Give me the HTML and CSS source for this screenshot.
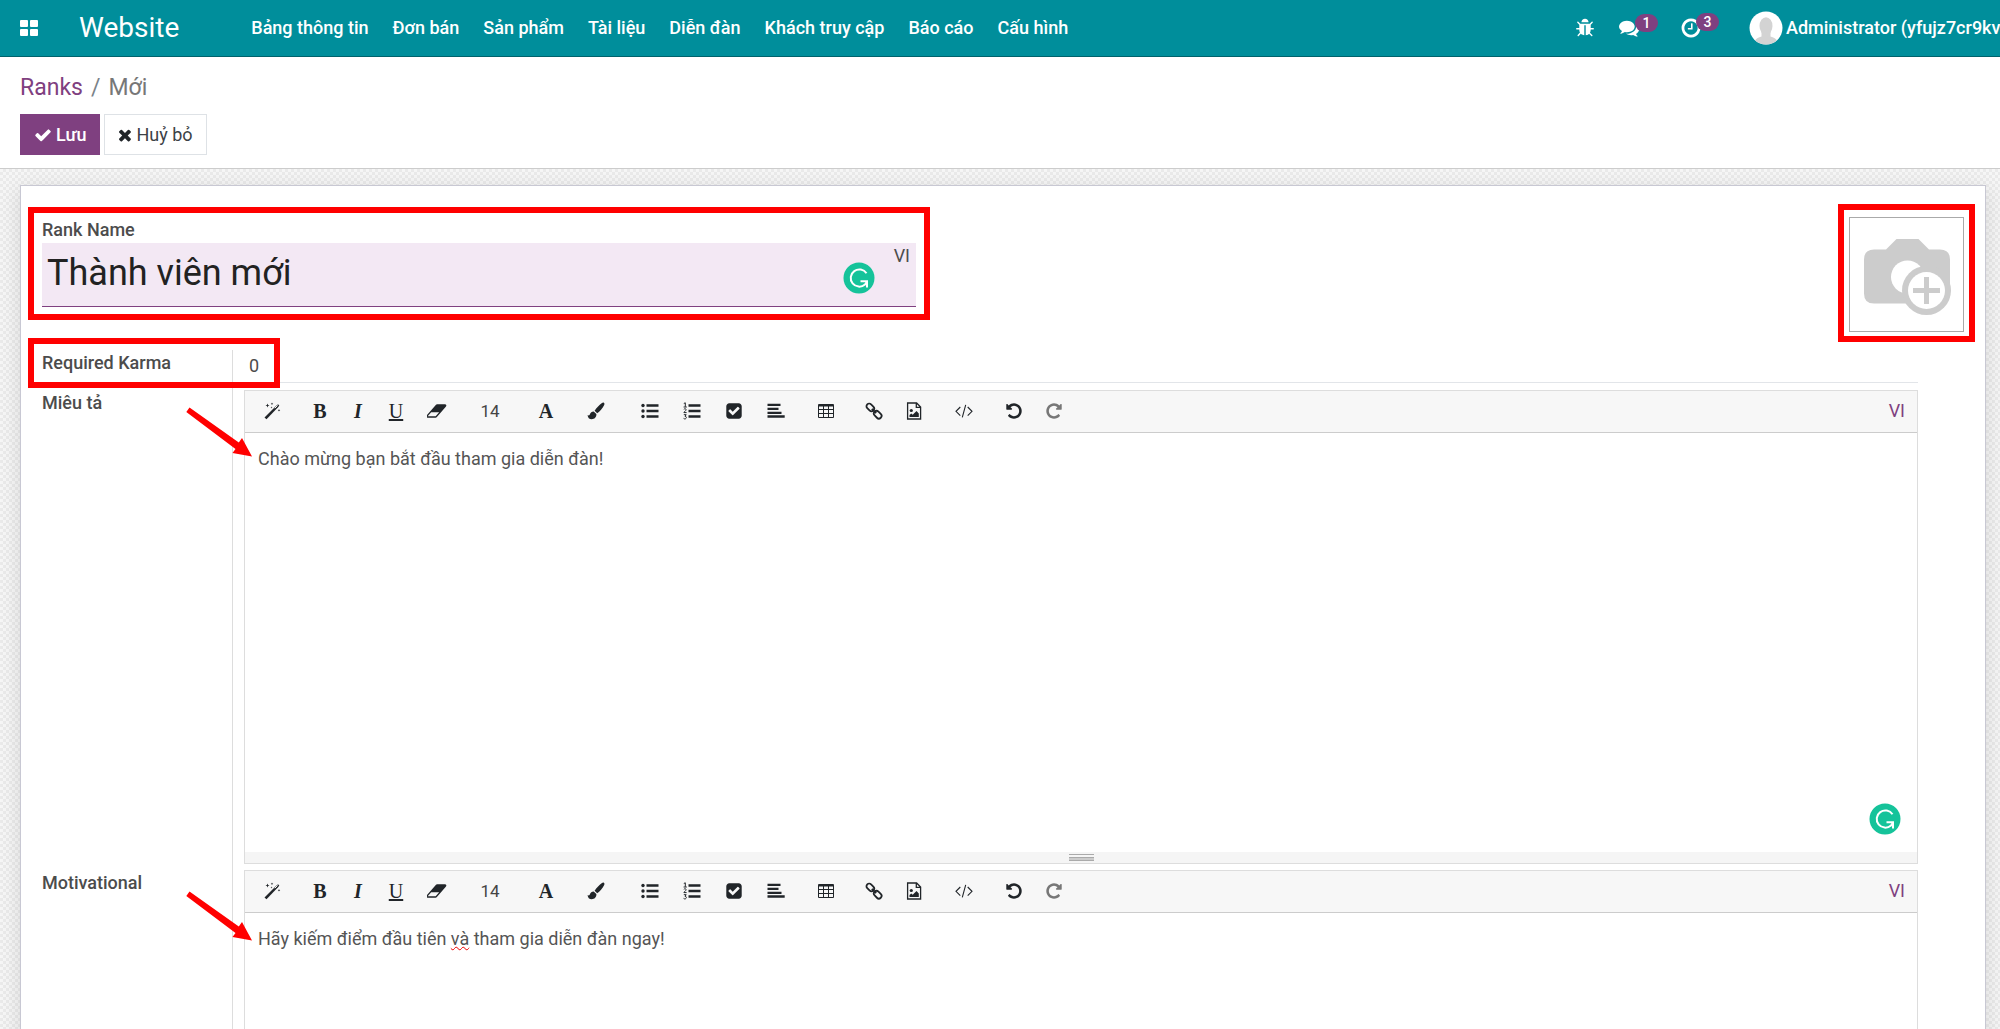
FILE: index.html
```html
<!DOCTYPE html>
<html lang="vi">
<head>
<meta charset="utf-8">
<title>Ranks - Mới</title>
<link rel="stylesheet" href="styles.css">
</head>
<body>
<svg class="sprite" aria-hidden="true">
  <symbol id="i-apps" viewBox="0 0 18 16"><rect width="8" height="7" rx="1"/><rect x="10" width="8" height="7" rx="1"/><rect y="9" width="8" height="7" rx="1"/><rect x="10" y="9" width="8" height="7" rx="1"/></symbol>
  <symbol id="i-bug" viewBox="0 0 1792 1792"><path d="M1696 960q0 26-19 45t-45 19h-224q0 171-67 290l208 209q19 19 19 45t-19 45q-18 19-45 19t-45-19l-198-197q-5 5-15 13t-42 28.500-65 36.500-82 29-97 13v-896h-128v896q-51 0-101.500-13.500t-87-33-66-39-43.500-32.500l-15-14-183 207q-20 21-48 21-24 0-43-16-19-18-20.500-44.500t15.500-46.500l202-227q-58-114-58-274h-224q-26 0-45-19t-19-45 19-45 45-19h224v-294l-173-173q-19-19-19-45t19-45 45-19 45 19l173 173h844l173-173q19-19 45-19t45 19 19 45-19 45l-173 173v294h224q26 0 45 19t19 45zm-480-576h-640q0-133 93.500-226.500t226.500-93.500 226.500 93.500 93.500 226.500z"/></symbol>
  <symbol id="i-comments" viewBox="0 0 1792 1792"><path d="M1408 768q0 139-94 257t-256.500 186.500-353.500 68.500q-86 0-176-16-124 88-278 128-36 9-86 16h-3q-11 0-20.500-8t-11.500-21q-1-3-1-6.500t.5-6.500 2-6l2.500-5 3.500-5.500 4-5 4.500-5 4-4.500q5-6 23-25t26-29.500 22.500-29 25-38.500 20.500-44q-124-72-195-177t-71-224q0-139 94-257t256.500-186.500 353.500-68.500 353.500 68.500 256.500 186.500 94 257zm384 256q0 120-71 224.500t-195 176.500q10 24 20.500 44t25 38.500 22.500 29 26 29.500 23 25q1 1 4 4.500t4.500 5 4 5 3.500 5.500l2.500 5 2 6 .5 6.500-1 6.500q-3 14-13 22t-22 7q-50-7-86-16-154-40-278-128-90 16-176 16-271 0-472-132 58 4 88 4 161 0 309-45t264-129q125-92 192-212t67-254q0-77-23-152 129 71 204 178t75 230z"/></symbol>
  <symbol id="i-clock" viewBox="0 0 1792 1792"><path d="M1024 544v448q0 14-9 23t-23 9h-320q-14 0-23-9t-9-23v-64q0-14 9-23t23-9h224v-352q0-14 9-23t23-9h64q14 0 23 9t9 23zm416 352q0-148-73-273t-198-198-273-73-273 73-198 198-73 273 73 273 198 198 273 73 273-73 198-198 73-273zm224 0q0 209-103 385.500t-279.500 279.500-385.500 103-385.500-103-279.500-279.500-103-385.500 103-385.500 279.500-279.500 385.500-103 385.500 103 279.500 279.500 103 385.500z"/></symbol>
  <symbol id="i-check" viewBox="0 0 1792 1792"><path d="M1671 566q0 40-28 68l-724 724-136 136q-28 28-68 28t-68-28l-136-136-362-362q-28-28-28-68t28-68l136-136q28-28 68-28t68 28l294 295 656-657q28-28 68-28t68 28l136 136q28 28 28 68z"/></symbol>
  <symbol id="i-times" viewBox="200 200 1400 1400"><path d="M1490 1322q0 40-28 68l-136 136q-28 28-68 28t-68-28l-294-294-294 294q-28 28-68 28t-68-28l-136-136q-28-28-28-68t28-68l294-294-294-294q-28-28-28-68t28-68l136-136q28-28 68-28t68 28l294 294 294-294q28-28 68-28t68 28l136 136q28 28 28 68t-28 68l-294 294 294 294q28 28 28 68z"/></symbol>
  <symbol id="i-magic" viewBox="0 0 18 18"><path d="M1.500 15.500 13 4l2-1.800 1.300 1.300L15 5.300 3.500 17.200z"/><path d="M11.800 6.200 14.600 3.400" stroke="#f7f7f7" stroke-width="1"/><path d="M4.500 1.500l.6 1.400 1.400.6-1.400.6-.6 1.400-.6-1.400-1.400-.6 1.400-.6zM9 .5l.4.900.9.400-.9.400L9 3.100l-.4-.9-.9-.4.900-.4zM8.500 4.500l.3.700.7.300-.7.300-.3.700-.3-.7-.7-.3.700-.3zM16 7l.4.900.9.400-.9.400-.4.900-.4-.9-.9-.4.900-.4z"/></symbol>
  <symbol id="i-eraser" viewBox="0 0 1920 1792"><path d="M832 1408l336-384h-768l-336 384h768zm1013-1077q15 34 9.500 71.500t-30.500 65.500l-896 1024q-38 44-96 44h-768q-38 0-69.500-20.500t-47.500-54.500q-15-34-9.500-71.500t30.500-65.500l896-1024q38-44 96-44h768q38 0 69.500 20.500t47.500 54.500z"/></symbol>
  <symbol id="i-brush" viewBox="0 0 18 18"><path d="M16.500.6c1 .4 1.200 1.400.7 2.400C15.500 6.500 12.800 9.700 10.200 11.300L7.600 8.700C9.500 6 12.500 2.500 15 1c.5-.4 1-.6 1.500-.4zM6.700 9.500l2.700 2.600c.2 3.200-2 5.200-4.700 5.200C2.200 17.300.8 15.700.6 13c1 .6 1.700.6 2.200-.6.700-1.900 2-2.900 3.900-2.900z"/></symbol>
  <symbol id="i-ul" viewBox="0 0 18 18"><circle cx="2" cy="3.500" r="1.700"/><circle cx="2" cy="9" r="1.700"/><circle cx="2" cy="14.500" r="1.700"/><path d="M5.500 2.300h12v2.400h-12zM5.500 7.800h12v2.400h-12zM5.500 13.300h12v2.400h-12z"/></symbol>
  <symbol id="i-ol" viewBox="0 0 18 18"><path d="M5.500 2.300h12v2.400h-12zM5.500 7.800h12v2.400h-12zM5.500 13.300h12v2.400h-12z"/><path fill="none" stroke="currentColor" stroke-width="1" d="M.8 1.500 2.300.8v4M.6 5h3.200M.8 7.300c1-1 2.500-.5 2.300.5-.1.800-1.700 1.600-2.200 2.800h2.700M.8 12.700h2.400l-1.200 1.600c2 0 1.700 2.600-.2 2.600-.6 0-1-.2-1.200-.5"/></symbol>
  <symbol id="i-checksq" viewBox="0 0 1792 1792"><path d="M813 1299l614-614q19-19 19-45t-19-45l-102-102q-19-19-45-19t-45 19l-467 467-211-211q-19-19-45-19t-45 19l-102 102q-19 19-19 45t19 45l358 358q19 19 45 19t45-19zm851-883v960q0 119-84.500 203.500t-203.500 84.500h-960q-119 0-203.500-84.500t-84.500-203.500v-960q0-119 84.500-203.500t203.500-84.500h960q119 0 203.500 84.500t84.500 203.500z"/></symbol>
  <symbol id="i-align" viewBox="0 0 18 18"><path d="M.5 1.800h13V4H.5zM.5 5.800h11V8H.5zM.5 9.800h14V12H.5zM.5 13.300h17.200v2.400H.5z"/></symbol>
  <symbol id="i-table" viewBox="0 0 18 18"><path fill="none" stroke="currentColor" d="M1.500 3.500v12h15v-12M1.500 7.500h15M1.500 11.500h15M6.500 4v11M11.500 4v11"/><rect x="1" y="2" width="16" height="2.600" rx="1"/></symbol>
  <symbol id="i-link" viewBox="0 0 18 18"><g fill="none" stroke="currentColor" stroke-width="1.800"><rect x="1" y="2.700" width="8.600" height="5.400" rx="2.700" transform="rotate(45 5.300 5.400)"/><rect x="8.400" y="10" width="8.600" height="5.400" rx="2.700" transform="rotate(45 12.700 12.700)"/><path d="M6.800 6.800 11.200 11.200"/></g></symbol>
  <symbol id="i-image" viewBox="0 0 18 18"><path fill="none" stroke="currentColor" stroke-width="1.300" d="M2.600 1h9l4 4v12h-13zM11.300 1v4.400h4.300"/><circle cx="6.300" cy="8.500" r="1.600"/><path d="M4.500 15v-2l1.800-1.600 1.400 1.300 3.800-3.600 2.300 2.500V15z"/></symbol>
  <symbol id="i-code" viewBox="0 0 18 18"><path fill="none" stroke="currentColor" stroke-width="1.100" d="M5.300 5 1 9.300l4.300 4.300M12.700 5 17 9.300l-4.300 4.300M10.700 2.800 7.300 15.400"/></symbol>
  <symbol id="i-undo" viewBox="0 0 1792 1792"><path d="M1664 896q0 156-61 298t-164 245-245 164-298 61q-172 0-327-72.500t-264-204.500q-7-10-6.500-22.500t8.500-20.500l137-138q10-9 25-9 16 2 23 12 73 95 179 147t225 52q104 0 198.500-40.500t163.500-109.500 109.500-163.500 40.500-198.500-40.500-198.500-109.500-163.500-163.500-109.500-198.500-40.500q-98 0-188 35.500t-160 101.500l137 138q31 30 14 69-17 40-59 40h-448q-26 0-45-19t-19-45v-448q0-42 40-59 39-17 69 14l130 129q107-101 244.500-156.500t284.500-55.500q156 0 298 61t245 164 164 245 61 298z"/></symbol>
  <symbol id="i-redo" viewBox="0 0 1792 1792"><use href="#i-undo" width="1792" height="1792" transform="translate(1792 0) scale(-1 1)"/></symbol>
  <symbol id="i-grammar" viewBox="0 0 32 32"><circle cx="16" cy="16" r="15.500" fill="#15c39a"/><path fill="none" stroke="#fff" stroke-width="2" d="M23.500 11.300A8.600 8.600 0 1 0 22 22.500l2-3"/><path fill="#fff" d="M17.500 18.200H25v7.300h-2v-5.300h-5.500z"/></symbol>
  <symbol id="i-arrow" viewBox="0 0 68 52"><path fill="#f00" d="M3.500.5 52.800 35.500 56 31l10 18.500L46.500 46l3-4L.3 5z"/></symbol>
</svg>

<header class="navbar">
  <button class="apps" aria-label="Apps"><svg class="apps-icon"><use href="#i-apps"/></svg></button>
  <a class="brand" href="#">Website</a>
  <nav class="menu">
    <a href="#">Bảng thông tin</a><a href="#">Đơn bán</a><a href="#">Sản phẩm</a><a href="#">Tài liệu</a><a href="#">Diễn đàn</a><a href="#">Khách truy cập</a><a href="#">Báo cáo</a><a href="#">Cấu hình</a>
  </nav>
  <div class="systray">
    <button class="tray" aria-label="Debug"><svg class="icon icon-wide"><use href="#i-bug"/></svg></button>
    <button class="tray" aria-label="Messages"><svg class="icon icon-wide"><use href="#i-comments"/></svg><span class="badge">1</span></button>
    <button class="tray" aria-label="Activities"><svg class="icon icon-large"><use href="#i-clock"/></svg><span class="badge">3</span></button>
    <button class="user">
      <svg class="avatar" viewBox="0 0 34 34"><clipPath id="round"><circle cx="17" cy="17" r="16.500"/></clipPath><circle cx="17" cy="17" r="16.500" fill="#fff"/><g clip-path="url(#round)" fill="#d3d3d3"><ellipse cx="17" cy="15" rx="6.500" ry="8.800"/><path d="M12.500 19h9v6.500c4 1 6.500 2.500 7.500 6.500v3H5v-3c1-4 3.500-5.500 7.500-6.500z"/></g></svg>
      <span>Administrator (yfujz7cr9kvx</span>
    </button>
  </div>
</header>

<section class="control-panel">
  <div class="breadcrumb"><a href="#">Ranks</a><span class="slash">/</span><span class="current">Mới</span></div>
  <div class="actions">
    <button class="btn btn-primary"><svg class="btn-icon"><use href="#i-check"/></svg>Lưu</button>
    <button class="btn btn-default"><svg class="btn-icon btn-icon-small"><use href="#i-times"/></svg>Huỷ bỏ</button>
  </div>
</section>

<main class="content">
  <form class="sheet">
    <div class="head">
      <div class="title marked">
        <label class="label" for="rank">Rank Name</label>
        <div class="title-field">
          <input id="rank" class="title-input" type="text" value="Thành viên mới" spellcheck="false">
          <svg class="grammar grammar-title"><use href="#i-grammar"/></svg>
          <button type="button" class="lang lang-title">VI</button>
        </div>
      </div>
      <button type="button" class="photo marked" aria-label="Image">
        <svg class="camera" viewBox="0 0 88 78"><path fill="#ccc" d="M11 11.500h12L33.500 1h22L66 11.500h11q10 0 10 10v34q0 10-10 10H11q-10 0-10-10v-34q0-10 10-10z"/><circle cx="44.500" cy="39" r="16.500" fill="#fff"/><circle cx="63.500" cy="52.500" r="24.500" fill="#ccc"/><circle cx="63.500" cy="52.500" r="18.500" fill="#fff"/><path fill="#ccc" d="M61 39h5v11h11v5H66v11h-5V55H50v-5h11z"/></svg>
      </button>
    </div>

    <div class="group">
      <div class="row row-karma">
        <label class="label" for="karma">Required Karma</label>
        <div class="cell"><input id="karma" class="karma" type="text" value="0"></div>
      </div>
      <div class="row">
        <span class="label" id="desc-label">Miêu tả</span>
        <svg class="arrow arrow-first"><use href="#i-arrow"/></svg>
        <div class="cell">
          <div class="editor">
            <div class="toolbar">
              <div class="tools"><button type="button" class="tool" aria-label="Style"><svg class="icon"><use href="#i-magic"/></svg></button></div>
              <div class="tools"><button type="button" class="tool tool-narrow glyph bold">B</button><button type="button" class="tool tool-narrow glyph italic">I</button><button type="button" class="tool tool-narrow glyph under">U</button><button type="button" class="tool tool-wide" aria-label="Clear"><svg class="icon icon-wide"><use href="#i-eraser"/></svg></button></div>
              <div class="tools"><button type="button" class="tool tool-size">14</button></div>
              <div class="tools"><button type="button" class="tool tool-color glyph bold">A</button><button type="button" class="tool tool-color" aria-label="Highlight"><svg class="icon"><use href="#i-brush"/></svg></button></div>
              <div class="tools"><button type="button" class="tool" aria-label="Bullets"><svg class="icon"><use href="#i-ul"/></svg></button><button type="button" class="tool" aria-label="Numbers"><svg class="icon"><use href="#i-ol"/></svg></button><button type="button" class="tool" aria-label="Checklist"><svg class="icon"><use href="#i-checksq"/></svg></button><button type="button" class="tool" aria-label="Align"><svg class="icon"><use href="#i-align"/></svg></button></div>
              <div class="tools"><button type="button" class="tool" aria-label="Table"><svg class="icon"><use href="#i-table"/></svg></button></div>
              <div class="tools"><button type="button" class="tool tool-narrow" aria-label="Link"><svg class="icon"><use href="#i-link"/></svg></button><button type="button" class="tool" aria-label="Picture"><svg class="icon"><use href="#i-image"/></svg></button></div>
              <div class="tools"><button type="button" class="tool" aria-label="Code"><svg class="icon"><use href="#i-code"/></svg></button></div>
              <div class="tools"><button type="button" class="tool" aria-label="Undo"><svg class="icon"><use href="#i-undo"/></svg></button><button type="button" class="tool tool-narrow muted" aria-label="Redo"><svg class="icon"><use href="#i-redo"/></svg></button></div>
              <button type="button" class="lang lang-editor">VI</button>
            </div>
            <div class="text" contenteditable="true" role="textbox" aria-labelledby="desc-label" spellcheck="false">Chào mừng bạn bắt đầu tham gia diễn đàn!</div>
            <svg class="grammar grammar-editor"><use href="#i-grammar"/></svg>
            <div class="statusbar"><span class="grip"></span></div>
          </div>
        </div>
      </div>
      <div class="row">
        <span class="label" id="moti-label">Motivational</span>
        <svg class="arrow"><use href="#i-arrow"/></svg>
        <div class="cell">
          <div class="editor">
            <div class="toolbar">
              <div class="tools"><button type="button" class="tool" aria-label="Style"><svg class="icon"><use href="#i-magic"/></svg></button></div>
              <div class="tools"><button type="button" class="tool tool-narrow glyph bold">B</button><button type="button" class="tool tool-narrow glyph italic">I</button><button type="button" class="tool tool-narrow glyph under">U</button><button type="button" class="tool tool-wide" aria-label="Clear"><svg class="icon icon-wide"><use href="#i-eraser"/></svg></button></div>
              <div class="tools"><button type="button" class="tool tool-size">14</button></div>
              <div class="tools"><button type="button" class="tool tool-color glyph bold">A</button><button type="button" class="tool tool-color" aria-label="Highlight"><svg class="icon"><use href="#i-brush"/></svg></button></div>
              <div class="tools"><button type="button" class="tool" aria-label="Bullets"><svg class="icon"><use href="#i-ul"/></svg></button><button type="button" class="tool" aria-label="Numbers"><svg class="icon"><use href="#i-ol"/></svg></button><button type="button" class="tool" aria-label="Checklist"><svg class="icon"><use href="#i-checksq"/></svg></button><button type="button" class="tool" aria-label="Align"><svg class="icon"><use href="#i-align"/></svg></button></div>
              <div class="tools"><button type="button" class="tool" aria-label="Table"><svg class="icon"><use href="#i-table"/></svg></button></div>
              <div class="tools"><button type="button" class="tool tool-narrow" aria-label="Link"><svg class="icon"><use href="#i-link"/></svg></button><button type="button" class="tool" aria-label="Picture"><svg class="icon"><use href="#i-image"/></svg></button></div>
              <div class="tools"><button type="button" class="tool" aria-label="Code"><svg class="icon"><use href="#i-code"/></svg></button></div>
              <div class="tools"><button type="button" class="tool" aria-label="Undo"><svg class="icon"><use href="#i-undo"/></svg></button><button type="button" class="tool tool-narrow muted" aria-label="Redo"><svg class="icon"><use href="#i-redo"/></svg></button></div>
              <button type="button" class="lang lang-editor">VI</button>
            </div>
            <div class="text" contenteditable="true" role="textbox" aria-labelledby="moti-label" spellcheck="false">Hãy kiếm điểm đầu tiên <span class="typo">và</span> tham gia diễn đàn ngay!</div>
            <div class="statusbar"><span class="grip"></span></div>
          </div>
        </div>
      </div>
    </div>
  </form>
</main>
</body>
</html>
```
FILE: styles.css
```css
*, *::before, *::after { box-sizing: border-box; }

body {
  margin: 0;
  height: 100vh;
  display: flex;
  flex-direction: column;
  overflow: hidden;
  font-family: Roboto, sans-serif;
  font-size: 18px;
  line-height: 26px;
  color: #4c4c4c;
  background: #fff;
}

button, input { font: inherit; color: inherit; border: 0; background: none; padding: 0; }
a { text-decoration: none; color: inherit; }
svg { fill: currentColor; flex: none; display: block; }
.sprite { display: none; }
.icon { width: 18px; height: 18px; }
.icon-wide { width: 20px; height: 20px; }
.icon-large { width: 22px; height: 22px; }

/* Top bar */
.navbar {
  flex: none;
  display: flex;
  align-items: center;
  height: 57px;
  padding-left: 20px;
  overflow: hidden;
  white-space: nowrap;
  color: #fff;
  background: #008e9b;
  border-bottom: 1px solid #00626c;
}
.apps-icon { width: 18px; height: 16px; }
.brand { margin-left: 41px; font-size: 28px; }
.menu { display: flex; gap: 24px; margin-left: 72px; font-weight: 500; }
.systray { display: flex; align-items: center; margin-left: auto; gap: 24px; width: 425px; font-weight: 500; }
.tray { position: relative; display: flex; flex: none; align-items: center; width: 37px; }
.tray:first-child { width: 20px; }
.tray .badge {
  position: absolute;
  left: 16px;
  top: -4px;
  width: 23px;
  height: 18px;
  border-radius: 9px;
  background: #7f4080;
  font-size: 14px;
  line-height: 18px;
}
.user { display: flex; flex: none; align-items: center; gap: 3px; margin-left: 8px; }
.avatar { width: 34px; height: 34px; }

/* Breadcrumb and actions */
.control-panel {
  flex: none;
  padding: 17px 20px 13px;
  border-bottom: 1px solid #ccc;
}
.breadcrumb { display: flex; gap: 8px; font-size: 23px; line-height: 28px; color: #777; }
.breadcrumb a { color: #7f4080; }
.slash { color: #7a8288; }
.actions { display: flex; gap: 4px; margin-top: 12px; }
.btn { display: flex; align-items: center; gap: 4px; height: 41px; padding: 0 13px; border: 1px solid; }
.btn-primary { color: #fff; background: #7f4080; border-color: #7f4080; font-weight: 500; }
.btn-default { color: #3c4146; background: #fff; border-color: #dee2e6; }
.btn-icon { width: 18px; height: 18px; }
.btn-icon-small { width: 14px; height: 14px; color: #212529; }

/* Scrolling form area */
.content {
  flex: 1;
  min-height: 0;
  overflow-y: auto;
  scrollbar-width: none;
  padding: 16px 14px 16px 20px;
  background: repeating-conic-gradient(#eaeaea 0 25%, #f6f6f6 0 50%) 0 0 / 6px 6px;
}
.sheet {
  padding: 31px 21px 31px;
  background: #fff;
  border: 1px solid #c8c8d3;
  box-shadow: 0 5px 20px rgba(0, 0, 0, .12);
}
.head { display: flex; justify-content: space-between; align-items: flex-start; }
.title { width: 874px; }
.label { font-weight: 500; white-space: nowrap; }
.title .label { display: block; }

.marked { position: relative; }
.marked::after {
  content: "";
  position: absolute;
  inset: -10px -14px -13px;
  border: 6px solid #f00;
  pointer-events: none;
}
.photo.marked::after { inset: -14px -12px -11px; }

.title-field { position: relative; }
.title-input {
  display: block;
  width: 100%;
  height: 64px;
  padding: 0 5px 4px;
  font-size: 36px;
  color: #222;
  background: #f3e8f4;
  border-bottom: 1px solid #7f4080;
  outline: 0;
}
.grammar { position: absolute; width: 32px; height: 32px; }
.grammar-title { right: 41px; top: 19px; }
.grammar-editor { right: 16px; bottom: 28px; }
.lang-title { position: absolute; right: 6px; top: 0; }

.photo { width: 115px; height: 115px; padding-top: 4px; border: 1px solid #aaa; display: flex; justify-content: center; align-items: center; }
.camera { width: 88px; height: 78px; }

/* Field rows */
.group { margin: 18px 46px 0 0; }
.row { position: relative; display: grid; grid-template-columns: 190px minmax(0, 1fr); }
.cell { padding: 0 0 6px 11px; border-left: 1px solid #ddd; }
.karma { display: block; width: 100%; height: 33px; padding: 0 5px 2px; border-bottom: 1px solid #e2e5e9; }
.row-karma .cell { padding-bottom: 7px; }
.row-karma::after {
  content: "";
  position: absolute;
  left: -14px;
  top: -12px;
  width: 252px;
  height: 50px;
  border: 6px solid #f00;
  pointer-events: none;
}
.arrow { position: absolute; left: 144px; top: 21px; width: 68px; height: 52px; z-index: 1; }
.arrow-first { top: 17px; }

/* Rich text editor */
.editor { position: relative; border: 1px solid #ddd; }
.toolbar {
  display: flex;
  align-items: center;
  gap: 8px;
  height: 42px;
  padding: 0 0 2px 6px;
  background: #f7f7f7;
  border-bottom: 1px solid #ccc;
}
.tools { display: flex; color: #212529; }
.tool { display: flex; align-items: center; justify-content: center; width: 42px; height: 34px; }
.tool-narrow { width: 38px; }
.tool-wide { width: 44px; }
.tool-size { width: 46px; font-size: 17px; color: #444; }
.tool-color { width: 50px; }
.muted { color: #777; }
.glyph { font-family: "Liberation Serif", serif; font-size: 20px; }
.bold { font-weight: 700; }
.italic { font-weight: 700; font-style: italic; }
.under { text-decoration: underline; }
.lang-editor { margin-left: auto; padding-right: 12px; color: #7f4080; }
.text { height: 419px; padding: 13px; outline: 0; color: #555; }
.typo { text-decoration: underline wavy #e00 1px; }
.statusbar { display: flex; justify-content: center; height: 11px; padding-top: 2px; background: #f5f5f5; }
.grip { width: 25px; height: 7px; border: solid #aaa; border-width: 1px 0; background: linear-gradient(#f5f5f5 0 2px, #aaa 2px 3px, #ccc 3px); }
```
